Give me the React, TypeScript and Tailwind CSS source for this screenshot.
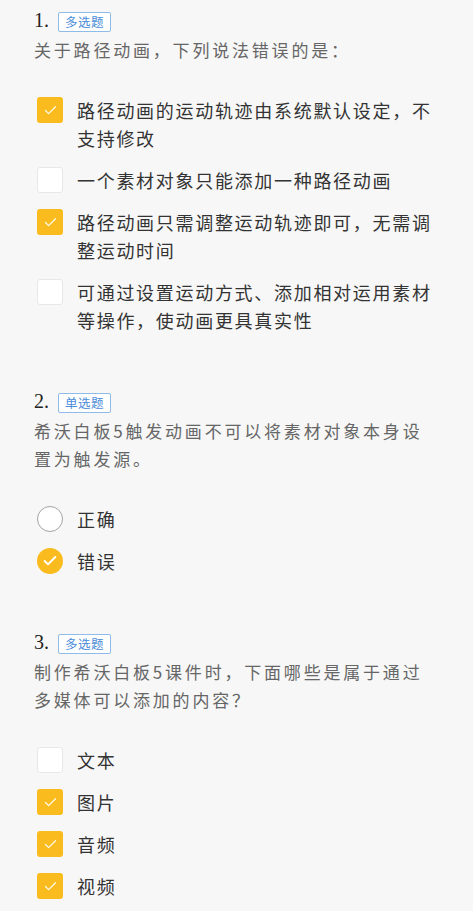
import { Check } from 'lucide-react';

type Kind = 'multi' | 'single';

interface Option {
  text: string;
  checked: boolean;
}

interface Question {
  no: number;
  kind: Kind;
  title: string;
  options: Option[];
}

const questions: Question[] = [
  {
    no: 1,
    kind: 'multi',
    title: '关于路径动画，下列说法错误的是：',
    options: [
      { text: '路径动画的运动轨迹由系统默认设定，不支持修改', checked: true },
      { text: '一个素材对象只能添加一种路径动画', checked: false },
      { text: '路径动画只需调整运动轨迹即可，无需调整运动时间', checked: true },
      { text: '可通过设置运动方式、添加相对运用素材等操作，使动画更具真实性', checked: false },
    ],
  },
  {
    no: 2,
    kind: 'single',
    title: '希沃白板5触发动画不可以将素材对象本身设置为触发源。',
    options: [
      { text: '正确', checked: false },
      { text: '错误', checked: true },
    ],
  },
  {
    no: 3,
    kind: 'multi',
    title: '制作希沃白板5课件时，下面哪些是属于通过多媒体可以添加的内容？',
    options: [
      { text: '文本', checked: false },
      { text: '图片', checked: true },
      { text: '音频', checked: true },
      { text: '视频', checked: true },
    ],
  },
];

function Mark({ kind, checked }: { kind: Kind; checked: boolean }) {
  if (kind === 'single') {
    return checked ? (
      <div className="w-[26px] h-[26px] rounded-full bg-[#f9bb1d] flex items-center justify-center shrink-0">
        <Check size={16} strokeWidth={3} className="text-white" />
      </div>
    ) : (
      <div className="w-[26px] h-[26px] rounded-full border-[1.5px] border-[#a3a3a3] bg-white shrink-0" />
    );
  }
  return checked ? (
    <div className="w-[26px] h-[26px] rounded-[3px] bg-[#f9bb1d] flex items-center justify-center shrink-0">
      <Check size={15} strokeWidth={2} className="text-white/90" />
    </div>
  ) : (
    <div className="w-[26px] h-[26px] rounded-[3px] border border-[#e8e8e8] bg-white shrink-0" />
  );
}

export default function App() {
  return (
    <div className="w-[473px] h-[911px] bg-[#f7f7f7] overflow-hidden flex flex-col font-['Noto_Sans_CJK_SC',sans-serif]">
      <div className="flex-1">
        {questions.map((q) => (
          <section key={q.no} className="pl-[34px] pr-[36px] pt-[13px] pb-[46px] first:pt-[12px]">
            <div className="flex items-start gap-[9px] h-[24px]">
              <span className="font-['Liberation_Serif',serif] text-[20px] leading-[15px] mt-[1px] text-[#222]">
                {q.no}.
              </span>
              <span className="border border-[#8fbbe8] rounded-[2px] bg-white text-[#4a8cd8] text-[12.5px] leading-[18px] px-[6px] tracking-[0.5px]">
                {q.kind === 'multi' ? '多选题' : '单选题'}
              </span>
            </div>
            <p className="text-[17px] leading-[28px] tracking-[2.8px] text-[#666]">{q.title}</p>
            <div className="mt-[32px] flex flex-col gap-[14px] pl-[3px]">
              {q.options.map((o) => (
                <div key={o.text} className="flex items-start gap-[14px]">
                  <div className="pt-[1px]">
                    <Mark kind={q.kind} checked={o.checked} />
                  </div>
                  <span className="text-[18px] leading-[28px] tracking-[1.7px] text-[#333]">{o.text}</span>
                </div>
              ))}
            </div>
          </section>
        ))}
      </div>
      <div className="h-[5px] bg-[#ebebeb] shrink-0" />
    </div>
  );
}
